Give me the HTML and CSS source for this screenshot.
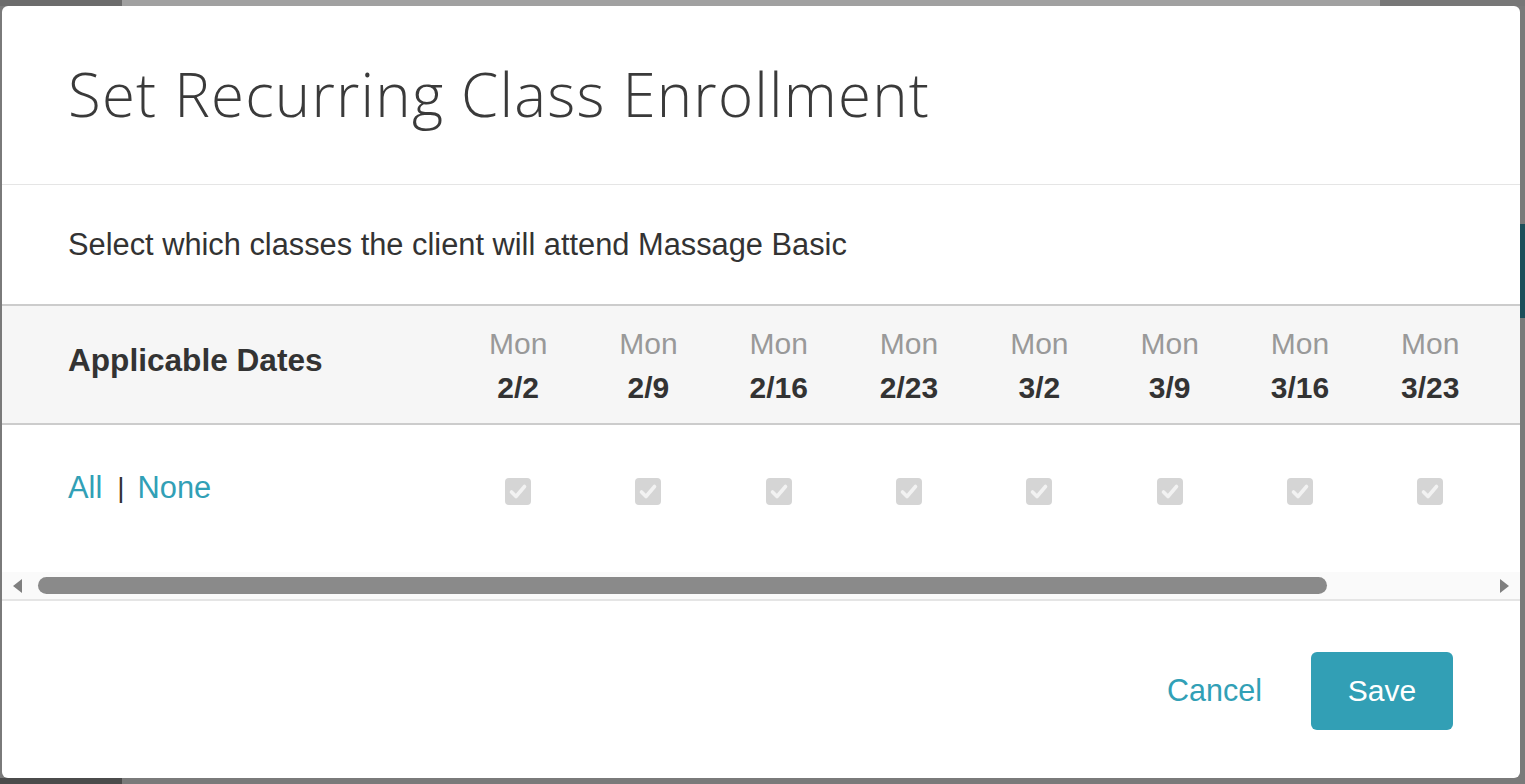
FILE: index.html
```html
<!DOCTYPE html>
<html lang="en">
<head>
<meta charset="utf-8">
<title>Set Recurring Class Enrollment</title>
<link rel="stylesheet" href="styles.css">
</head>
<body>
<div class="modal">
  <div class="modal-header">
    <h1 class="modal-title">Set Recurring Class Enrollment</h1>
  </div>
  <div class="modal-intro">
    <p>Select which classes the client will attend Massage Basic</p>
  </div>
  <div class="table-scroll">
    <div class="dates-grid head-row">
      <div class="label-cell">Applicable Dates</div>
      <div class="date-cell"><span class="dow">Mon</span><span class="day">2/2</span></div>
      <div class="date-cell"><span class="dow">Mon</span><span class="day">2/9</span></div>
      <div class="date-cell"><span class="dow">Mon</span><span class="day">2/16</span></div>
      <div class="date-cell"><span class="dow">Mon</span><span class="day">2/23</span></div>
      <div class="date-cell"><span class="dow">Mon</span><span class="day">3/2</span></div>
      <div class="date-cell"><span class="dow">Mon</span><span class="day">3/9</span></div>
      <div class="date-cell"><span class="dow">Mon</span><span class="day">3/16</span></div>
      <div class="date-cell"><span class="dow">Mon</span><span class="day">3/23</span></div>
    </div>
    <div class="dates-grid body-row">
      <div class="label-cell links"><a class="link">All</a><span class="sep">|</span><a class="link">None</a></div>
      <div class="check-cell"><span class="check"><svg viewBox="0 0 26 26"><path d="M6.5 13.5l4.5 4.5 8.5-10"/></svg></span></div>
      <div class="check-cell"><span class="check"><svg viewBox="0 0 26 26"><path d="M6.5 13.5l4.5 4.5 8.5-10"/></svg></span></div>
      <div class="check-cell"><span class="check"><svg viewBox="0 0 26 26"><path d="M6.5 13.5l4.5 4.5 8.5-10"/></svg></span></div>
      <div class="check-cell"><span class="check"><svg viewBox="0 0 26 26"><path d="M6.5 13.5l4.5 4.5 8.5-10"/></svg></span></div>
      <div class="check-cell"><span class="check"><svg viewBox="0 0 26 26"><path d="M6.5 13.5l4.5 4.5 8.5-10"/></svg></span></div>
      <div class="check-cell"><span class="check"><svg viewBox="0 0 26 26"><path d="M6.5 13.5l4.5 4.5 8.5-10"/></svg></span></div>
      <div class="check-cell"><span class="check"><svg viewBox="0 0 26 26"><path d="M6.5 13.5l4.5 4.5 8.5-10"/></svg></span></div>
      <div class="check-cell"><span class="check"><svg viewBox="0 0 26 26"><path d="M6.5 13.5l4.5 4.5 8.5-10"/></svg></span></div>
    </div>
    <div class="hscroll">
      <span class="arrow arrow-left"></span>
      <div class="track"><div class="thumb"></div></div>
      <span class="arrow arrow-right"></span>
    </div>
  </div>
  <div class="modal-footer">
    <button class="btn-cancel">Cancel</button>
    <button class="btn-save">Save</button>
  </div>
</div>
</body>
</html>
```
FILE: styles.css
```css
* { box-sizing: border-box; }
html, body { height: 100%; }
body {
  margin: 0;
  padding: 6px 5px 6px 2px;
  font-family: "Liberation Sans", Arial, sans-serif;
  color: #333;
  overflow: hidden;
  background:
    linear-gradient(to right, #6c6c6c 0 122px, #a1a1a1 122px 1380px, #777 1380px) top / 100% 6px no-repeat,
    linear-gradient(to right, #4b4b4b 0 122px, #7a7a7a 122px) bottom / 100% 6px no-repeat,
    linear-gradient(#7a7a7a 0 224px, #1c4f5a 224px 318px, #7a7a7a 318px) right / 5px 100% no-repeat,
    #7a7a7a;
}
.modal {
  position: relative;
  height: 772px;
  background: #fff;
  border-radius: 6px;
  display: flex;
  flex-direction: column;
  overflow: hidden;
}
.modal-header {
  height: 179px;
  flex: none;
  border-bottom: 1px solid #e5e5e5;
  display: flex;
  align-items: center;
  padding: 0 66px;
}
.modal-title {
  margin: 0;
  font-family: "Open Sans", sans-serif;
  font-weight: 350;
  font-size: 60px;
  color: #3a3a3a;
  letter-spacing: 1.2px;
  padding-bottom: 2px;
}
.modal-intro {
  height: 119px;
  flex: none;
  display: flex;
  align-items: center;
  padding: 0 66px;
}
.modal-intro p {
  margin: 0;
  font-size: 30.8px;
  color: #333;
}
.table-scroll {
  flex: none;
  overflow: hidden;
  border-top: 2px solid #ccc;
}
.dates-grid {
  display: grid;
  grid-template-columns: 385px repeat(8, 130.3px);
  padding-left: 66px;
}
.head-row {
  height: 119px;
  background: #f6f6f6;
  border-bottom: 2px solid #ccc;
  align-items: center;
}
.label-cell {
  font-size: 31.6px;
  font-weight: 700;
  color: #333;
}
.head-row .label-cell { padding-bottom: 8px; }
.date-cell {
  display: flex;
  flex-direction: column;
  align-items: center;
  font-size: 30px;
  line-height: 44px;
  padding-top: 2px;
}
.dow { color: #999; }
.day { font-weight: 700; color: #333; }
.body-row {
  height: 147px;
  align-items: center;
}
.links {
  font-weight: 400;
  font-size: 30.8px;
  display: flex;
  align-items: center;
  padding-bottom: 22px;
}
.link { color: #31a0b6; cursor: pointer; }
.sep { color: #333; margin: 0 13px 0 15px; font-size: 28px; }
.check-cell {
  display: flex;
  justify-content: center;
  padding-bottom: 14px;
}
.check {
  width: 26px;
  height: 27px;
  background: #d5d5d5;
  border-radius: 4px;
  display: block;
}
.check svg { width: 26px; height: 27px; display: block; }
.check path {
  fill: none;
  stroke: #f2f2f2;
  stroke-width: 3.6;
  stroke-linecap: round;
  stroke-linejoin: round;
}
.hscroll {
  height: 29px;
  background: #fafafa;
  border-bottom: 2px solid #e5e5e5;
  display: flex;
  align-items: center;
  padding: 0 11px;
}
.arrow {
  width: 0;
  height: 0;
  border-top: 7.5px solid transparent;
  border-bottom: 7.5px solid transparent;
  flex: none;
}
.arrow-left { border-right: 9px solid #7f7f7f; }
.arrow-right { border-left: 9px solid #7f7f7f; }
.track {
  flex: 1;
  height: 17px;
  margin: 0 16px;
}
.thumb {
  width: 1289px;
  height: 17px;
  background: #8a8a8a;
  border-radius: 9px;
}
.modal-footer {
  flex: 1;
  display: flex;
  align-items: center;
  justify-content: flex-end;
  padding: 2px 67px 0 0;
  gap: 49px;
}
.btn-cancel {
  border: 0;
  background: none;
  padding: 0;
  font-family: "Liberation Sans", Arial, sans-serif;
  font-size: 30.5px;
  color: #31a0b6;
  cursor: pointer;
}
.btn-save {
  width: 142px;
  height: 78px;
  border: 0;
  border-radius: 6px;
  background: #329fb5;
  color: #fff;
  font-family: "Liberation Sans", Arial, sans-serif;
  font-size: 30px;
  cursor: pointer;
}
```
